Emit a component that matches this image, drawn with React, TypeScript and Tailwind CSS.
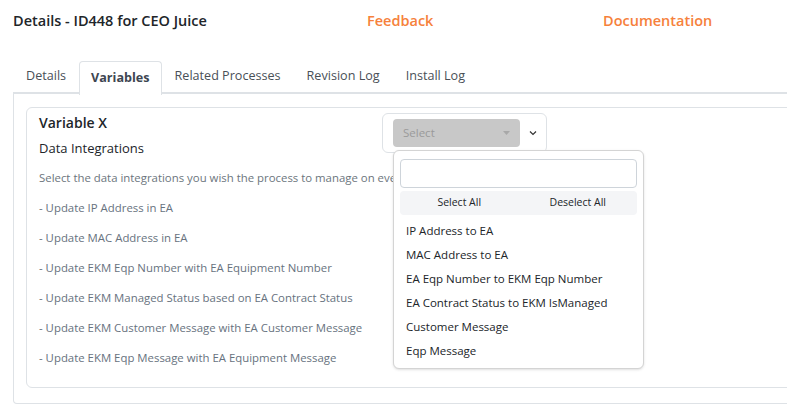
import React from 'react';

const tabs = ['Details', 'Variables', 'Related Processes', 'Revision Log', 'Install Log'];

const integrations = [
  '- Update IP Address in EA',
  '- Update MAC Address in EA',
  '- Update EKM Eqp Number with EA Equipment Number',
  '- Update EKM Managed Status based on EA Contract Status',
  '- Update EKM Customer Message with EA Customer Message',
  '- Update EKM Eqp Message with EA Equipment Message',
];

const options = [
  'IP Address to EA',
  'MAC Address to EA',
  'EA Eqp Number to EKM Eqp Number',
  'EA Contract Status to EKM IsManaged',
  'Customer Message',
  'Eqp Message',
];

function MultiSelect() {
  return (
    <div className="relative w-[165px] h-[40px] border border-[#dee2e6] rounded-md flex items-center pl-[10px]">
      <div className="w-[127px] h-[28px] rounded bg-[#c8c8c8] flex items-center justify-between pl-[10px] pr-[10px]">
        <span className="text-[11.5px] text-[#9a9a9a]">Select</span>
        <svg width="7" height="4" viewBox="0 0 7 4">
          <path d="M0 0h7L3.5 4z" fill="#a8a8a8" />
        </svg>
      </div>
      <svg className="ml-[8px]" width="10" height="10" viewBox="0 0 10 10" fill="none">
        <path d="M2 3.5l3 3 3-3" stroke="#333" strokeWidth="1.2" />
      </svg>

      <div className="absolute left-[10px] top-[36px] w-[251px] h-[219px] bg-white border border-[#d4d4d4] rounded-md shadow-sm z-10 px-[6px] pt-[8px]">
        <div className="h-[29px] border border-[#ced4da] rounded" />
        <div className="mt-[3px] h-[24px] bg-[#f4f5f7] rounded flex text-[10.5px] text-[#212529]">
          <div className="flex-1 flex items-center justify-center">Select All</div>
          <div className="flex-1 flex items-center justify-center">Deselect All</div>
        </div>
        <ul className="mt-[4px] px-[6px]">
          {options.map((o) => (
            <li key={o} className="h-[24px] flex items-center text-[11.5px] text-[#212529]">
              {o}
            </li>
          ))}
        </ul>
      </div>
    </div>
  );
}

export default function App() {
  return (
    <div className="w-[787px] h-[412px] overflow-hidden bg-white font-['Open_Sans',sans-serif] text-[#212529]">
      <div className="flex items-center h-[42px] pl-[13px] text-[14.5px] font-semibold">
        <div className="w-[354px]">Details - ID448 for CEO Juice</div>
        <div className="w-[236px] text-[#f6813b]">Feedback</div>
        <div className="text-[#f6813b]">Documentation</div>
      </div>

      <div className="ml-[13px] mt-[19px] w-[800px]">
        <div className="flex h-[33px] border-b-2 border-[#dee2e6]">
          {tabs.map((t) =>
            t === 'Variables' ? (
              <div
                key={t}
                className="-mb-[2px] h-[34px] px-[11px] flex items-center border border-b-0 border-[#dee2e6] rounded-t bg-white text-[12.6px] font-bold text-[#3d4651]"
              >
                {t}
              </div>
            ) : (
              <div key={t} className="px-[13px] flex items-center text-[12.6px] text-[#495057]">
                {t}
              </div>
            )
          )}
        </div>

        <div className="border border-t-0 border-[#dee2e6] rounded-b px-[12px] pt-[13px] pb-[15px]">
          <div className="border border-[#dee2e6] rounded-md px-[12px] pt-[4px] pb-[19px] flex">
            <div className="w-[343px] shrink-0 whitespace-nowrap">
              <div className="text-[14px] font-semibold leading-[22px]">Variable X</div>
              <div className="mt-[4px] text-[13px] leading-[20px]">Data Integrations</div>
              <div className="mt-[10px] text-[11.4px] leading-[20px] text-[#6c757d]">
                Select the data integrations you wish the process to manage on every sync
              </div>
              <ul className="mt-[10px] space-y-[10px]">
                {integrations.map((i) => (
                  <li key={i} className="text-[11.4px] leading-[20px] text-[#67727e]">
                    {i}
                  </li>
                ))}
              </ul>
            </div>
            <div className="mt-[1px]">
              <MultiSelect />
            </div>
          </div>
        </div>
      </div>
    </div>
  );
}
